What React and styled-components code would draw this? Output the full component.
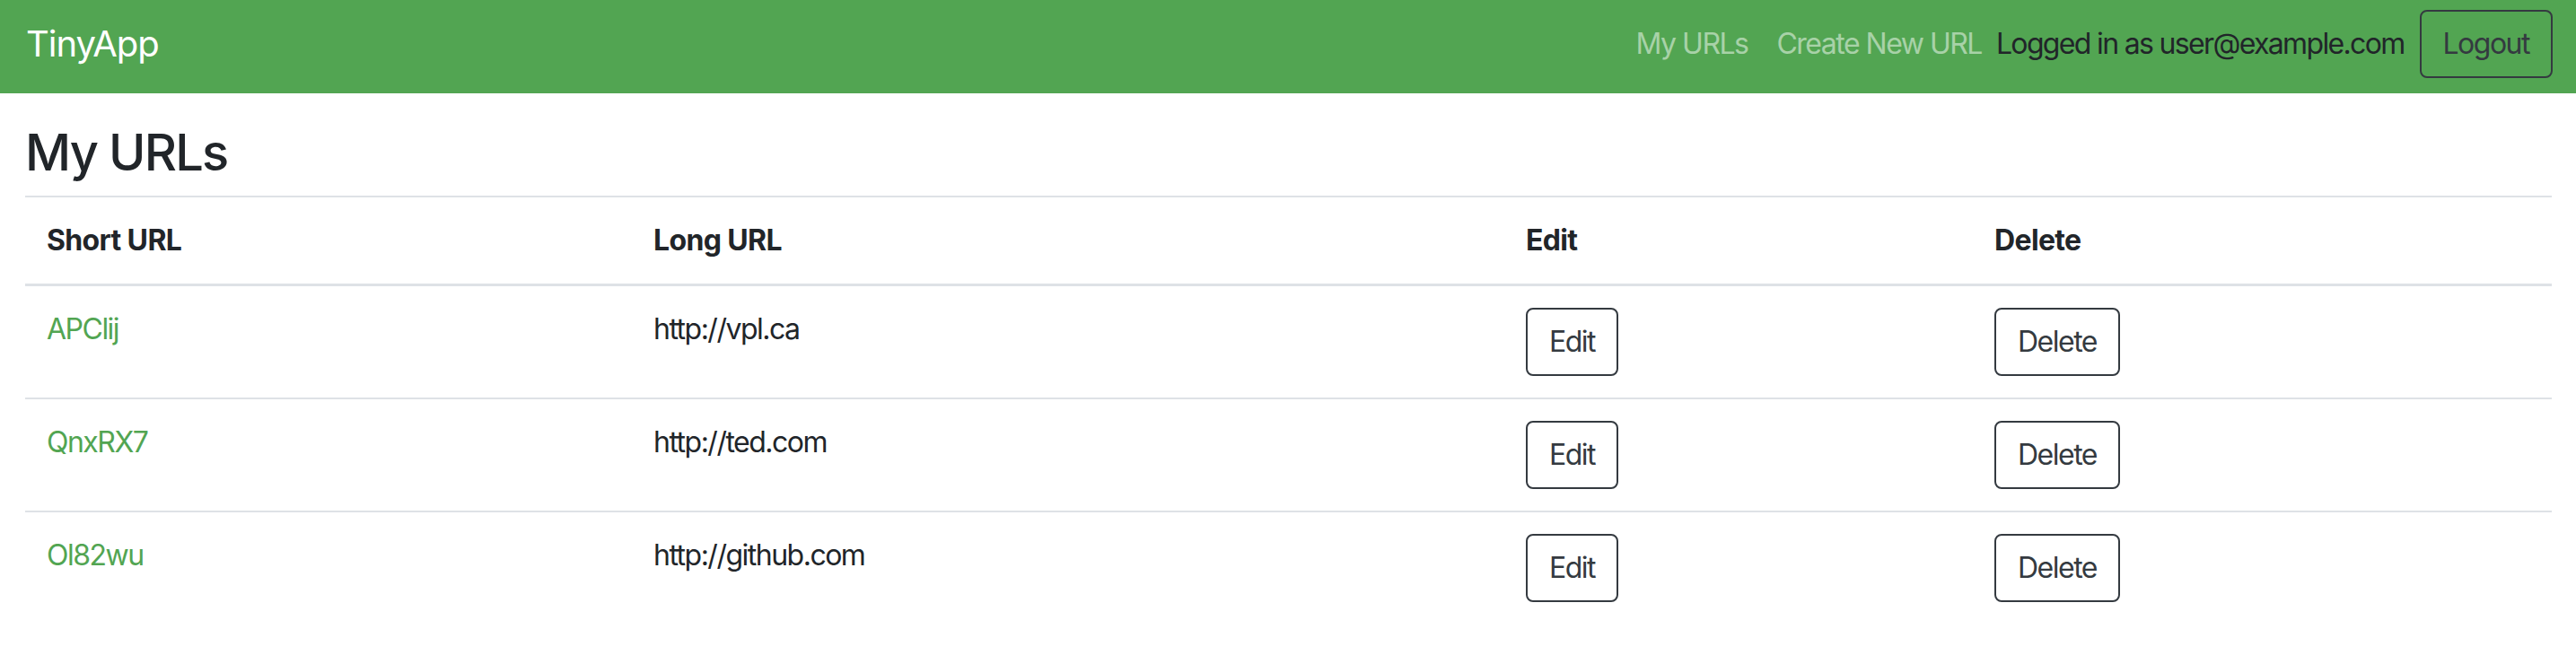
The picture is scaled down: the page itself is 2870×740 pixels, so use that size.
import React from 'react'
import styled, { createGlobalStyle } from 'styled-components'

const GlobalStyle = createGlobalStyle`
  html, body {
    margin: 0;
    padding: 0;
    background: #fff;
  }
  body {
    font-family: Inter, "Noto Sans", "Liberation Sans", sans-serif;
    color: #212529;
  }
  * {
    box-sizing: border-box;
  }
`

const urls = [
  { id: 'APClij', longURL: 'http://vpl.ca' },
  { id: 'QnxRX7', longURL: 'http://ted.com' },
  { id: 'Ol82wu', longURL: 'http://github.com' },
]

export default function App() {
  return (
    <>
      <GlobalStyle />
      <NavBar>
        <Brand href="#">TinyApp</Brand>
        <NavRight>
          <NavLink href="#">My URLs</NavLink>
          <NavLink href="#">Create New URL</NavLink>
          <UserText>Logged in as user@example.com</UserText>
          <OutlineButton>Logout</OutlineButton>
        </NavRight>
      </NavBar>

      <Page>
        <Title>My URLs</Title>
        <UrlTable>
          <thead>
            <tr>
              <Th $width={676}>Short URL</Th>
              <Th $width={972}>Long URL</Th>
              <Th $width={522}>Edit</Th>
              <Th $width={645}>Delete</Th>
            </tr>
          </thead>
          <tbody>
            {urls.map((url, i) => (
              <tr key={url.id}>
                <Td $first={i === 0}>
                  <ShortLink href="#">{url.id}</ShortLink>
                </Td>
                <Td $first={i === 0}>{url.longURL}</Td>
                <Td $first={i === 0}>
                  <OutlineButton>Edit</OutlineButton>
                </Td>
                <Td $first={i === 0}>
                  <OutlineButton>Delete</OutlineButton>
                </Td>
              </tr>
            ))}
          </tbody>
        </UrlTable>
      </Page>
    </>
  )
}

const NavBar = styled.nav`
  display: flex;
  align-items: center;
  justify-content: space-between;
  height: 104px;
  padding: 0 26px 7px 29px;
  background-color: #52a552;
`

const Brand = styled.a`
  color: #fff;
  font-size: 40px;
  line-height: 60px;
  letter-spacing: -0.026em;
  text-decoration: none;
`

const NavRight = styled.div`
  display: flex;
  align-items: center;
`

const NavLink = styled.a`
  padding: 0 16px;
  color: rgba(255, 255, 255, 0.5);
  font-size: 32px;
  line-height: 48px;
  letter-spacing: -0.047em;
  text-decoration: none;
`

const UserText = styled.span`
  margin: 0 17px 0 0;
  color: #212529;
  font-size: 32px;
  line-height: 48px;
  letter-spacing: -0.052em;
`

const OutlineButton = styled.button`
  display: inline-block;
  padding: 12px 24px;
  font-family: inherit;
  font-size: 32px;
  line-height: 48px;
  letter-spacing: -0.047em;
  color: #343a40;
  background: transparent;
  border: 2px solid #343a40;
  border-radius: 8px;
  cursor: pointer;
`

const Page = styled.main`
  padding: 0 27px 0 28px;
`

const Title = styled.h3`
  margin: 33px 0 14px;
  font-size: 56px;
  font-weight: 500;
  line-height: 67px;
  letter-spacing: -0.033em;
`

const UrlTable = styled.table`
  width: 100%;
  table-layout: fixed;
  border-collapse: collapse;
  font-size: 32px;
  line-height: 48px;
  letter-spacing: -0.047em;
`

const Th = styled.th`
  width: ${(p) => p.$width}px;
  padding: 24px;
  text-align: left;
  font-weight: 700;
  letter-spacing: -0.02em;
  vertical-align: bottom;
  border-top: 2px solid #dee2e6;
  border-bottom: 3px solid #dee2e6;
`

const Td = styled.td`
  padding: 24px;
  vertical-align: top;
  border-top: ${(p) => (p.$first ? 'none' : '2px solid #dee2e6')};
`

const ShortLink = styled.a`
  color: #52a552;
  text-decoration: none;
`
